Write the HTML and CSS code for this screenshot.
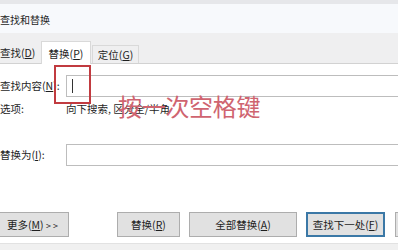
FILE: index.html
```html
<!DOCTYPE html>
<html lang="zh-CN">
<head>
<meta charset="utf-8">
<title>查找和替换</title>
<link rel="stylesheet" href="styles.css">
</head>
<body>
<div class="dlg">
  <div class="titlebar">查找和替换</div>
  <div class="tabstrip">
    <div class="tab tab-first">查找(<u>D</u>)</div>
    <div class="tab tab-active">替换(<u>P</u>)</div>
    <div class="tab tab-third">定位(<u>G</u>)</div>
  </div>
  <div class="content">
    <div class="row row-find">
      <div class="label">查找内容(<u>N</u>):</div>
      <div class="input"><span class="caret"></span></div>
    </div>
    <div class="row row-opts">
      <div class="label">选项:</div>
      <div class="opts">向下搜索, 区分全/半角</div>
    </div>
    <div class="row row-repl">
      <div class="label">替换为(<u>I</u>):</div>
      <div class="input"></div>
    </div>
    <div class="buttons">
      <div class="btn btn-more">更多(<u>M</u>) <span class="arrows">&gt;&gt;</span></div>
      <div class="btn btn-repl">替换(<u>R</u>)</div>
      <div class="btn btn-all">全部替换(<u>A</u>)</div>
      <div class="btn btn-next">查找下一处(<u>F</u>)</div>
      <div class="btn btn-cancel"></div>
    </div>
  </div>
  <div class="bottomstrip"></div>
  <div class="redbox"></div>
  <div class="note">按一次空格键</div>
</div>
</body>
</html>
```

FILE: styles.css
```css
html, body {
  margin: 0;
  padding: 0;
  background: #ffffff;
  overflow: hidden;
}
body {
  width: 398px;
  height: 250px;
}
.dlg {
  position: relative;
  margin-left: -2px;
  width: 420px;
  height: 250px;
  font-family: "Noto Sans CJK SC", "Noto Sans", sans-serif;
  font-size: 10.5px;
  color: #1e1e1e;
}
u {
  text-decoration: underline;
  text-underline-offset: 1px;
}
.titlebar {
  box-sizing: border-box;
  height: 33px;
  border-top: 4px solid #e6e7ea;
  background: #f7f9fc;
  padding-top: 9px;
  padding-left: 2px;
  line-height: 14px;
  font-size: 10px;
}
.tabstrip {
  box-sizing: border-box;
  height: 31px;
  background: #efeff0;
  border-bottom: 1px solid #d2d2d2;
  display: flex;
  align-items: flex-end;
}
.tab {
  box-sizing: border-box;
  line-height: 14px;
  text-align: center;
}
.tab-first {
  width: 43px;
  text-align: left;
  padding-left: 2px;
  padding-bottom: 3px;
}
.tab-active {
  width: 50px;
  height: 23px;
  margin-bottom: -1px;
  background: #ffffff;
  border: 1px solid #d9d9d9;
  border-bottom: none;
  padding-top: 5px;
}
.tab-third {
  width: 47px;
  height: 18px;
  margin-left: 1px;
  border: 1px solid #d9d9d9;
  border-bottom: none;
  padding-top: 2px;
}
.content {
  background: #ffffff;
}
.row {
  display: flex;
  align-items: center;
}
.label {
  width: 68px;
  flex: none;
  padding-left: 2px;
  box-sizing: border-box;
  line-height: 14px;
  white-space: nowrap;
}
.input {
  box-sizing: border-box;
  flex: 1;
  height: 22px;
  border: 1px solid #bdbdbd;
  background: #ffffff;
  padding-left: 5px;
  display: flex;
  align-items: center;
}
.caret {
  display: block;
  width: 1px;
  height: 14px;
  background: #333333;
}
.row-find {
  margin-top: 11px;
}
.row-opts {
  margin-top: 5px;
  height: 14px;
}
.opts {
  line-height: 14px;
  white-space: nowrap;
}
.row-repl {
  margin-top: 28px;
}
.buttons {
  display: flex;
  margin-top: 46px;
  height: 25px;
}
.btn {
  box-sizing: border-box;
  height: 25px;
  background: #e1e1e1;
  border: 1px solid #adadad;
  line-height: 23px;
  text-align: center;
  white-space: nowrap;
  flex: none;
}
.arrows {
  letter-spacing: 2px;
  font-size: 9px;
}
.btn-more {
  width: 71px;
}
.btn-repl {
  width: 63px;
  margin-left: 48px;
}
.btn-all {
  width: 108px;
  margin-left: 9px;
}
.btn-next {
  width: 79px;
  margin-left: 9px;
  border: 2px solid #3b78a6;
  line-height: 21px;
}
.btn-cancel {
  width: 80px;
  margin-left: 10px;
}
.bottomstrip {
  margin-top: 6px;
  height: 7px;
  background: #f0f0f0;
  border-top: 1px solid #e2e2e2;
}
.redbox {
  position: absolute;
  left: 56px;
  top: 65px;
  width: 37px;
  height: 39px;
  box-sizing: border-box;
  border: 2px solid #c13b40;
}
.note {
  position: absolute;
  left: 120px;
  top: 94px;
  font-size: 24px;
  line-height: 24px;
  letter-spacing: -0.3px;
  color: #cf6470;
  white-space: nowrap;
}
```
